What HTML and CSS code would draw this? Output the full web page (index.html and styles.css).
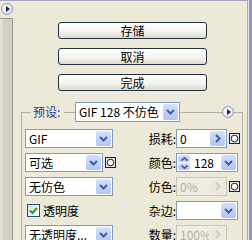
FILE: index.html
```html
<!DOCTYPE html>
<html lang="zh-CN">
<head>
<meta charset="utf-8">
<title>存储为Web所用格式</title>
<link rel="stylesheet" href="styles.css">
</head>
<body>
<div class="window">
  <div class="inner">
    <div class="topbar">
      <span class="circ"><svg width="4" height="6" viewBox="0 0 4 6"><polygon points="0,0 4,3 0,6" fill="#1c2540"/></svg></span>
    </div>
    <div class="body">
      <div class="leftpane"></div>
      <div class="main">
        <div class="buttons">
          <div class="btn">存储</div>
          <div class="btn">取消</div>
          <div class="btn">完成</div>
        </div>
        <div class="group">
          <div class="ghead">
            <span class="glabel">预设:</span>
            <div class="select preset">
              <span class="val">GIF 128 不仿色</span>
              <span class="arrow"><svg width="9" height="6" viewBox="0 0 9 6"><polyline points="1,1 4.5,4.5 8,1" fill="none" stroke="#3d5ca5" stroke-width="2"/></svg></span>
            </div>
            <span class="circ hcirc"><svg width="4" height="6" viewBox="0 0 4 6"><polygon points="0,0 4,3 0,6" fill="#1c2540"/></svg></span>
          </div>
          <div class="gbody">
            <div class="col-left">
              <div class="row">
                <div class="select w88">
                  <span class="val">GIF</span>
                  <span class="arrow"><svg width="9" height="6" viewBox="0 0 9 6"><polyline points="1,1 4.5,4.5 8,1" fill="none" stroke="#3d5ca5" stroke-width="2"/></svg></span>
                </div>
              </div>
              <div class="row">
                <div class="select w78">
                  <span class="val">可选</span>
                  <span class="arrow"><svg width="9" height="6" viewBox="0 0 9 6"><polyline points="1,1 4.5,4.5 8,1" fill="none" stroke="#3d5ca5" stroke-width="2"/></svg></span>
                </div>
                <span class="mask"><svg width="11" height="11" viewBox="0 0 11 11"><rect x=".5" y=".5" width="10" height="10" fill="#e4e4e4" stroke="#222"/><circle cx="5.5" cy="5.5" r="3.3" fill="#fff" stroke="#222"/></svg></span>
              </div>
              <div class="row">
                <div class="select w88">
                  <span class="val">无仿色</span>
                  <span class="arrow"><svg width="9" height="6" viewBox="0 0 9 6"><polyline points="1,1 4.5,4.5 8,1" fill="none" stroke="#3d5ca5" stroke-width="2"/></svg></span>
                </div>
              </div>
              <div class="row cbrow">
                <span class="cb"><svg width="11" height="11" viewBox="0 0 11 11"><polyline points="2,5.5 4.5,8 9,3" fill="none" stroke="#21a121" stroke-width="2"/></svg></span>
                <span class="cbtext">透明度</span>
              </div>
              <div class="row">
                <div class="select w88">
                  <span class="val">无透明度...</span>
                  <span class="arrow"><svg width="9" height="6" viewBox="0 0 9 6"><polyline points="1,1 4.5,4.5 8,1" fill="none" stroke="#3d5ca5" stroke-width="2"/></svg></span>
                </div>
              </div>
            </div>
            <div class="col-right">
              <div class="row">
                <span class="lbl">损耗:</span>
                <div class="select w51">
                  <span class="val">0</span>
                  <span class="arrow"><svg width="6" height="9" viewBox="0 0 6 9"><polyline points="1,1 4.5,4.5 1,8" fill="none" stroke="#3d5ca5" stroke-width="2"/></svg></span>
                </div>
                <span class="mask"><svg width="11" height="11" viewBox="0 0 11 11"><rect x=".5" y=".5" width="10" height="10" fill="#e4e4e4" stroke="#222"/><circle cx="5.5" cy="5.5" r="3.3" fill="#fff" stroke="#222"/></svg></span>
              </div>
              <div class="row">
                <span class="lbl">颜色:</span>
                <div class="select w62">
                  <span class="spin">
                    <span class="half"><svg width="7" height="4" viewBox="0 0 7 4"><polyline points="0.5,3.5 3.5,0.8 6.5,3.5" fill="none" stroke="#3d5ca5" stroke-width="1.6"/></svg></span>
                    <span class="half"><svg width="7" height="4" viewBox="0 0 7 4"><polyline points="0.5,0.5 3.5,3.2 6.5,0.5" fill="none" stroke="#3d5ca5" stroke-width="1.6"/></svg></span>
                  </span>
                  <span class="val">128</span>
                  <span class="arrow"><svg width="9" height="6" viewBox="0 0 9 6"><polyline points="1,1 4.5,4.5 8,1" fill="none" stroke="#3d5ca5" stroke-width="2"/></svg></span>
                </div>
              </div>
              <div class="row">
                <span class="lbl">仿色:</span>
                <div class="select w51 disabled">
                  <span class="val">0%</span>
                  <span class="arrow"><svg width="6" height="9" viewBox="0 0 6 9"><polyline points="1,1 4.5,4.5 1,8" fill="none" stroke="#cfccc0" stroke-width="2"/></svg></span>
                </div>
                <span class="mask"><svg width="11" height="11" viewBox="0 0 11 11"><rect x=".5" y=".5" width="10" height="10" fill="#e4e4e4" stroke="#222"/><circle cx="5.5" cy="5.5" r="3.3" fill="#fff" stroke="#222"/></svg></span>
              </div>
              <div class="row">
                <span class="lbl">杂边:</span>
                <div class="select w62">
                  <span class="val"></span>
                  <span class="arrow"><svg width="9" height="6" viewBox="0 0 9 6"><polyline points="1,1 4.5,4.5 8,1" fill="none" stroke="#3d5ca5" stroke-width="2"/></svg></span>
                </div>
              </div>
              <div class="row">
                <span class="lbl">数量:</span>
                <div class="select w51 disabled">
                  <span class="val">100%</span>
                  <span class="arrow"><svg width="6" height="9" viewBox="0 0 6 9"><polyline points="1,1 4.5,4.5 1,8" fill="none" stroke="#cfccc0" stroke-width="2"/></svg></span>
                </div>
              </div>
            </div>
          </div>
        </div>
      </div>
    </div>
  </div>
</div>
</body>
</html>
```

FILE: styles.css
```css
body {
  margin: 0;
  background: #ece9d8;
  font-family: "Noto Sans CJK SC", "Noto Sans", sans-serif;
  font-size: 12px;
  color: #000;
}

.window {
  width: 252px;
  height: 240px;
  box-sizing: border-box;
  border-right: 3px solid #8795c9;
  padding-right: 1px;
  overflow: hidden;
}

.inner {
  height: 100%;
  box-sizing: border-box;
  border-top: 1px solid #a5a5c2;
  border-right: 1px solid #aeab9d;
  display: flex;
  flex-direction: column;
}

.topbar {
  height: 17px;
  flex: none;
  display: flex;
}

.circ {
  width: 12px;
  height: 12px;
  flex: none;
  box-sizing: border-box;
  border-radius: 50%;
  border: 1px solid #8c9ac0;
  background: radial-gradient(circle at 40% 35%, #ffffff, #d3daea);
  display: flex;
  align-items: center;
  justify-content: center;
  padding-left: 1px;
}

.topbar .circ {
  margin: 2px 0 0 1px;
}

.body {
  flex: 1;
  display: flex;
  min-height: 0;
}

.leftpane {
  width: 13px;
  flex: none;
  box-sizing: border-box;
  border-top: 1px solid #9b988b;
  border-right: 1px solid #9b988b;
  background: linear-gradient(to right, #e3e0d3 3px, #d3d0c2 3px);
}

.main {
  flex: 1;
  padding-top: 4px;
  min-width: 0;
}

.buttons {
  display: flex;
  flex-direction: column;
  gap: 9px;
  margin-left: 45px;
  width: 149px;
}

.btn {
  height: 17px;
  box-sizing: border-box;
  border: 1px solid #22303f;
  border-radius: 3px;
  background: linear-gradient(#ffffff, #f5f4ef 55%, #dcd9cd);
  text-align: center;
  line-height: 15px;
}

.group {
  margin: 21px 0 0 8px;
  width: 222px;
  height: 200px;
  box-sizing: border-box;
  border: 1px solid #b4b1a4;
  border-bottom: none;
}

.ghead {
  display: flex;
  align-items: center;
  height: 20px;
  margin-top: -11px;
  padding-left: 9px;
}

.glabel {
  width: 33px;
  box-sizing: border-box;
  padding-left: 2px;
  background: #ece9d8;
  color: #1d3c9c;
  line-height: 16px;
}

.select {
  display: flex;
  height: 19px;
  box-sizing: border-box;
  border: 1px solid #7f9db9;
  background: #ffffff;
  flex: none;
}

.select.preset {
  width: 105px;
  height: 20px;
  margin-left: 11px;
}

.hcirc {
  margin-left: auto;
  margin-right: 8px;
}

.val {
  flex: 1;
  min-width: 0;
  padding-left: 3px;
  line-height: 17px;
  white-space: nowrap;
  overflow: hidden;
}

.arrow {
  width: 15px;
  flex: none;
  margin: 1px;
  box-sizing: border-box;
  border-radius: 2px;
  background: linear-gradient(#d3dffc, #b2c5f4);
  display: flex;
  align-items: center;
  justify-content: center;
}

.select.disabled {
  border-color: #c9c6b6;
  background: #efede2;
  color: #b3b0a2;
}

.select.disabled .arrow {
  background: #eae8dd;
}

.spin {
  width: 12px;
  flex: none;
  margin: 1px;
  display: flex;
  flex-direction: column;
  gap: 1px;
}

.half {
  flex: 1;
  border-radius: 2px;
  background: linear-gradient(#d3dffc, #b2c5f4);
  display: flex;
  align-items: center;
  justify-content: center;
}

.gbody {
  display: flex;
  padding: 7px 0 0 3px;
}

.col-left {
  width: 91px;
  flex: none;
  display: flex;
  flex-direction: column;
  gap: 5px;
}

.col-right {
  flex: 1;
  display: flex;
  flex-direction: column;
  gap: 5px;
}

.row {
  display: flex;
  align-items: center;
  height: 19px;
}

.w88 { width: 88px; }
.w78 { width: 78px; }
.w51 { width: 51px; }
.w62 { width: 62px; }

.mask {
  display: flex;
  margin-left: 2px;
}

.cbrow {
  padding-left: 2px;
}

.cb {
  width: 13px;
  height: 13px;
  box-sizing: border-box;
  border: 1px solid #1c5180;
  background: linear-gradient(135deg, #dcdcd7, #ffffff);
  display: flex;
  align-items: center;
  justify-content: center;
}

.cbtext {
  margin-left: 3px;
  line-height: 16px;
}

.lbl {
  width: 60px;
  flex: none;
  text-align: right;
  line-height: 16px;
}
```
